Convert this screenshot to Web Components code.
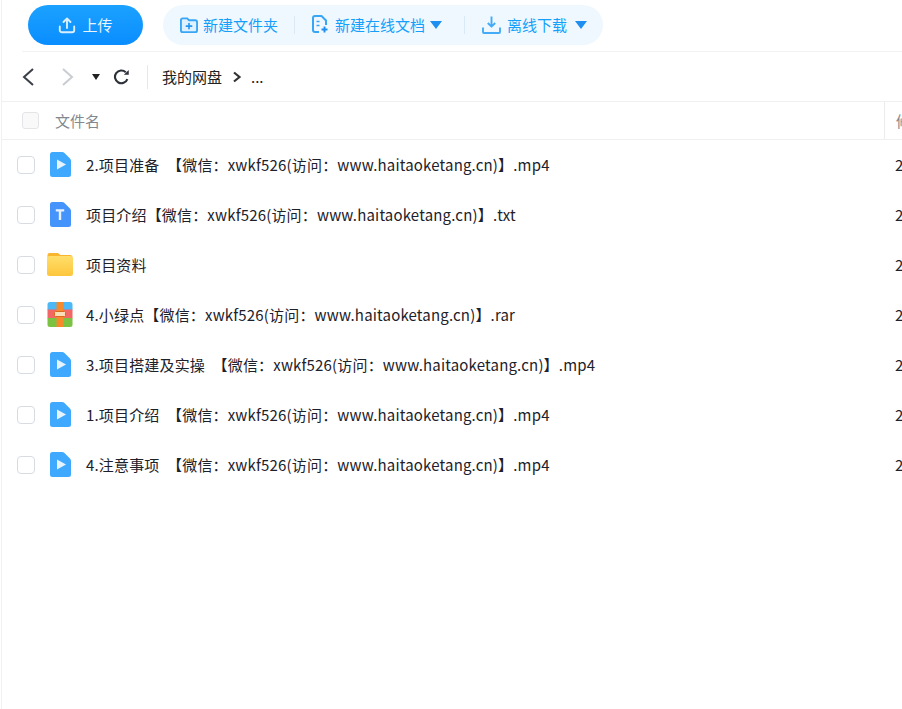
<!DOCTYPE html>
<html lang="zh">
<head>
<meta charset="utf-8">
<style>
  html, body { margin: 0; height: 100%; background: #fff; overflow: hidden; }
  body { font-family: "Noto Sans CJK SC", "Liberation Sans", sans-serif; color: #03081a; }
</style>
</head>
<body>
<disk-page>
  <disk-toolbar></disk-toolbar>
  <disk-nav></disk-nav>
  <file-head></file-head>
  <file-row type="video" name="2.项目准备 【微信：xwkf526(访问：www.haitaoketang.cn)】.mp4"></file-row>
  <file-row type="text" name="项目介绍【微信：xwkf526(访问：www.haitaoketang.cn)】.txt"></file-row>
  <file-row type="folder" name="项目资料"></file-row>
  <file-row type="rar" name="4.小绿点【微信：xwkf526(访问：www.haitaoketang.cn)】.rar"></file-row>
  <file-row type="video" name="3.项目搭建及实操 【微信：xwkf526(访问：www.haitaoketang.cn)】.mp4"></file-row>
  <file-row type="video" name="1.项目介绍 【微信：xwkf526(访问：www.haitaoketang.cn)】.mp4"></file-row>
  <file-row type="video" name="4.注意事项 【微信：xwkf526(访问：www.haitaoketang.cn)】.mp4"></file-row>
</disk-page>
<script>
// file type icons
const ICONS = {
  video: `<svg width="26" height="26" viewBox="0 0 26 26"><path d="M5.500 0h9.500q1.500 0 2.500 1l5.500 5.500q1 1 1 2.500V22.500a2.500 2.500 0 0 1-2.500 2.500H5.500A2.500 2.500 0 0 1 3 22.500V2.500A2.500 2.500 0 0 1 5.500 0z" fill="#3fa9ff"/><path d="M10 7.500l9 5-9 5z" fill="#e6f4ff"/></svg>`,
  text: `<svg width="26" height="26" viewBox="0 0 26 26"><path d="M5.500 0h9.500q1.500 0 2.500 1l5.500 5.500q1 1 1 2.500V22.500a2.500 2.500 0 0 1-2.500 2.500H5.500A2.500 2.500 0 0 1 3 22.500V2.500A2.500 2.500 0 0 1 5.500 0z" fill="#4594fb"/><path d="M8.800 7.300h8.400v2.200h-3v8.500h-2.400V9.500h-3z" fill="#e8f2ff"/></svg>`,
  folder: `<svg width="26" height="26" viewBox="0 0 26 26"><defs><linearGradient id="f" x1="0" y1="0" x2="0" y2="1"><stop offset="0" stop-color="#ffde6a"/><stop offset="1" stop-color="#fdc63c"/></linearGradient></defs><path d="M2.500 1h8.500l2.500 2h9.500a2.500 2.500 0 0 1 2.500 2v3H.500V3A2 2 0 0 1 2.500 1z" fill="#f9b52e"/><path d="M2.500 4h21A2.500 2.500 0 0 1 26 6.500v15a2.500 2.500 0 0 1-2.500 2.500h-21A2.500 2.500 0 0 1 0 21.500v-15A2.500 2.500 0 0 1 2.500 4z" fill="url(#f)"/></svg>`,
  rar: `<svg width="26" height="26" viewBox="0 0 26 26"><path d="M3 0h20a2.500 2.500 0 0 1 2.500 2.500V8H.500V2.500A2.500 2.500 0 0 1 3 0z" fill="#4cb8f5"/><rect x=".5" y="7.500" width="25" height="9" fill="#f26666"/><path d="M.500 16h25v6.500A2.500 2.500 0 0 1 23 25H3a2.500 2.500 0 0 1-2.500-2.500z" fill="#7cc242"/><rect x="9.500" y="0" width="7" height="25" fill="#f58a2c"/><rect x="7.500" y="9.500" width="11" height="5" rx="1" fill="#fbdcb8" stroke="#d9691c"/></svg>`
};

class DiskPage extends HTMLElement {
  constructor() {
    super();
    this.attachShadow({ mode: 'open' });
    this.shadowRoot.innerHTML = `
      <style>
        :host { display: block; height: 709px; overflow: hidden; border-left: 1px solid #f1f1f1; margin-left: 1px; box-sizing: border-box; }
      </style>
      <slot></slot>
    `;
  }
}

class DiskToolbar extends HTMLElement {
  constructor() {
    super();
    this.attachShadow({ mode: 'open' });
    this.shadowRoot.innerHTML = `
      <style>
        :host { display: flex; align-items: center; height: 52px; margin-left: 20px; padding: 0 0 2px 6px; box-sizing: border-box; border-bottom: 1px solid #f3f3f3; font-size: 15px; }
        .upload { width: 115px; height: 40px; border-radius: 20px; background: linear-gradient(#1ba1ff, #0a8dff); color: #e8f5ff; display: flex; align-items: center; justify-content: center; gap: 6px; }
        .tools { margin-left: 20px; width: 440px; height: 40px; border-radius: 20px; background: #eff8ff; display: flex; align-items: center; color: #14a0fa; box-sizing: border-box; padding-left: 17px; }
        .tool { display: flex; align-items: center; gap: 5px; white-space: nowrap; }
        .sep { width: 1px; height: 18px; background: #d9e9f5; margin: 0 16px; flex: none; }
        svg { display: block; flex: none; }
        .arrow { width: 0; height: 0; border-left: 6px solid transparent; border-right: 6px solid transparent; border-top: 8px solid #1c8ff0; flex: none; }
      </style>
      <div class="upload">
        <svg width="18" height="18" viewBox="0 0 18 18" fill="none" stroke="#d9efff" stroke-width="1.900" stroke-linecap="round" stroke-linejoin="round"><path d="M9 12V2.500M5.500 6L9 2.500 12.500 6M1.800 10.500v3.700a2 2 0 0 0 2 2h10.400a2 2 0 0 0 2-2v-3.700"/></svg>
        <span>上传</span>
      </div>
      <div class="tools">
        <div class="tool">
          <svg width="18" height="18" viewBox="0 0 19 18"><path d="M3 2h4.500l2 2H16a2 2 0 0 1 2 2v8.500a2 2 0 0 1-2 2H3a2 2 0 0 1-2-2V4a2 2 0 0 1 2-2z" fill="#dff1ff" stroke="#38a6f5" stroke-width="2"/><path d="M9.500 7.500v5.500M6.700 10.200h5.600" stroke="#1f95ef" stroke-width="1.700" stroke-linecap="round"/></svg>
          <span>新建文件夹</span>
        </div>
        <div class="sep"></div>
        <div class="tool">
          <svg width="18" height="19" viewBox="0 0 18 19" fill="none"><path d="M8 17H4a2 2 0 0 1-2-2V3a2 2 0 0 1 2-2h6.500L15 5.500V10" stroke="#38a6f5" stroke-width="2" stroke-linejoin="round"/><path d="M5.500 6.500h3M5.500 10.500h3" stroke="#38a6f5" stroke-width="1.700"/><path d="M13.500 11.500v6M10.500 14.500h6" stroke="#1c8ff0" stroke-width="1.900"/></svg>
          <span style="margin-left:1px">新建在线文档</span>
          <span class="arrow"></span>
        </div>
        <div class="sep" style="margin-left:22px;margin-right:17px"></div>
        <div class="tool">
          <svg width="19" height="19" viewBox="0 0 19 19" fill="none" stroke="#45abf6" stroke-width="1.900"><path d="M9.500 1.500v10M5.800 8l3.700 3.700L13.200 8" stroke-linejoin="round"/><path d="M1 12.500v4.500a1 1 0 0 0 1 1h15a1 1 0 0 0 1-1v-4.500"/></svg>
          <span style="margin-left:1px">离线下载</span>
          <span class="arrow" style="margin-left:3px"></span>
        </div>
      </div>
    `;
  }
}

class DiskNav extends HTMLElement {
  constructor() {
    super();
    this.attachShadow({ mode: 'open' });
    this.shadowRoot.innerHTML = `
      <style>
        :host { display: flex; align-items: center; height: 50px; box-sizing: border-box; padding: 0 0 0 19px; border-bottom: 1px solid #f0f0f0; font-size: 15px; color: #222; }
        svg { display: block; flex: none; }
        .sep { width: 1px; height: 24px; background: #e8e8e8; margin: 0 14px 0 17px; }
        .drop { width: 0; height: 0; border-left: 4px solid transparent; border-right: 4px solid transparent; border-top: 6px solid #222; margin: 0 13px 0 17px; }
        .gt { margin: 0 9px 0 10px; }
      </style>
      <svg width="14" height="20" viewBox="0 0 14 20" fill="none" stroke="#3a3f48" stroke-width="2"><path d="M12 2L3 10l9 8"/></svg>
      <svg style="margin-left:26px" width="14" height="20" viewBox="0 0 14 20" fill="none" stroke="#c9ccd1" stroke-width="2"><path d="M2 2l9 8-9 8"/></svg>
      <span class="drop"></span>
      <svg width="17" height="17" viewBox="0 0 16 16" fill="none" stroke="#2c3038" stroke-width="2"><path d="M13.500 10.500A6 6 0 1 1 12 4"/><path d="M14.800 1.800v4.600h-4.600z" stroke="none" fill="#2c3038"/></svg>
      <span class="sep"></span>
      <span>我的网盘</span>
      <svg class="gt" width="10" height="12" viewBox="0 0 10 12" fill="none" stroke="#333" stroke-width="2.200"><path d="M2 1.500L7.500 6 2 10.500"/></svg>
      <span>...</span>
    `;
  }
}

class FileHead extends HTMLElement {
  constructor() {
    super();
    this.attachShadow({ mode: 'open' });
    this.shadowRoot.innerHTML = `
      <style>
        :host { display: flex; align-items: center; height: 38px; box-sizing: border-box; border-bottom: 1px solid #f0f0f0; font-size: 15px; color: #83888f; white-space: nowrap; }
        .check { width: 15px; height: 15px; margin-left: 20px; border: 1px solid #e3e5e8; border-radius: 3px; background: #f9f9fa; flex: none; }
        .name { margin-left: 16px; width: 829px; flex: none; height: 100%; line-height: 37px; border-right: 1px solid #ececec; }
        .next { margin-left: 11px; }
      </style>
      <span class="check"></span>
      <span class="name">文件名</span>
      <span class="next">修改时间</span>
    `;
  }
}

class FileRow extends HTMLElement {
  constructor() {
    super();
    this.attachShadow({ mode: 'open' });
    const type = this.getAttribute('type');
    this.shadowRoot.innerHTML = `
      <style>
        :host { display: flex; align-items: center; height: 50px; font-size: 15px; color: #1d2129; white-space: nowrap; }
        .check { width: 16px; height: 16px; margin-left: 15px; border: 1px solid #d7dce2; border-radius: 4px; background: #fff; flex: none; }
        .icon { width: 26px; height: 26px; margin-left: 12px; flex: none; }
        svg { display: block; }
        .name { margin-left: 13px; margin-bottom: 2px; width: 809px; flex: none; letter-spacing: .17px; word-spacing: 4px; }
        .date { margin-bottom: 2px; }
      </style>
      <span class="check"></span>
      <span class="icon">${ICONS[type]}</span>
      <span class="name"></span>
      <span class="date">2023-08-12</span>
    `;
    this.shadowRoot.querySelector('.name').textContent = this.getAttribute('name');
  }
}

customElements.define('disk-page', DiskPage);
customElements.define('disk-toolbar', DiskToolbar);
customElements.define('disk-nav', DiskNav);
customElements.define('file-head', FileHead);
customElements.define('file-row', FileRow);
</script>
</body>
</html>
